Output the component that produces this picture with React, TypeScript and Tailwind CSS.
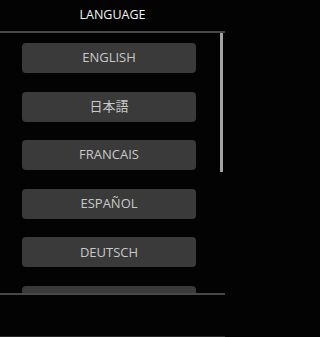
const languages = ["ENGLISH", "日本語", "FRANCAIS", "ESPAÑOL", "DEUTSCH", ""];

export default function App() {
  return (
    <div className="min-h-screen w-full bg-[#030303]">
      <div
        className="flex h-[337px] w-[225px] flex-col bg-[#030303] text-white"
        style={{ fontFamily: '"Open Sans", "Noto Sans CJK JP", sans-serif' }}
      >
        <div className="flex h-[31px] shrink-0 items-center justify-center text-[12.5px] text-[#f4f4f4]">
          LANGUAGE
        </div>
        <div className="h-[2px] shrink-0 bg-[#474747]" />
        <div className="flex h-[260px] shrink-0 overflow-hidden">
          <div className="flex w-[218px] flex-col items-center gap-[18.6px] pt-[10px]">
            {languages.map((lang, i) => (
              <button
                key={i}
                type="button"
                className="flex h-[30px] w-[174px] shrink-0 items-center justify-center rounded-[4px] bg-[#393a39] text-[13px] text-[#c9c9c9]"
              >
                {lang}
              </button>
            ))}
          </div>
          <div className="flex w-[7px] pl-[2px]">
            <div className="h-[139px] w-[3px] bg-[#a3a3a3]" />
          </div>
        </div>
        <div className="h-[2px] shrink-0 bg-[#474747]" />
        <div className="flex-1" />
        <div className="h-px shrink-0 bg-[#2a2a2a]" />
      </div>
    </div>
  );
}
